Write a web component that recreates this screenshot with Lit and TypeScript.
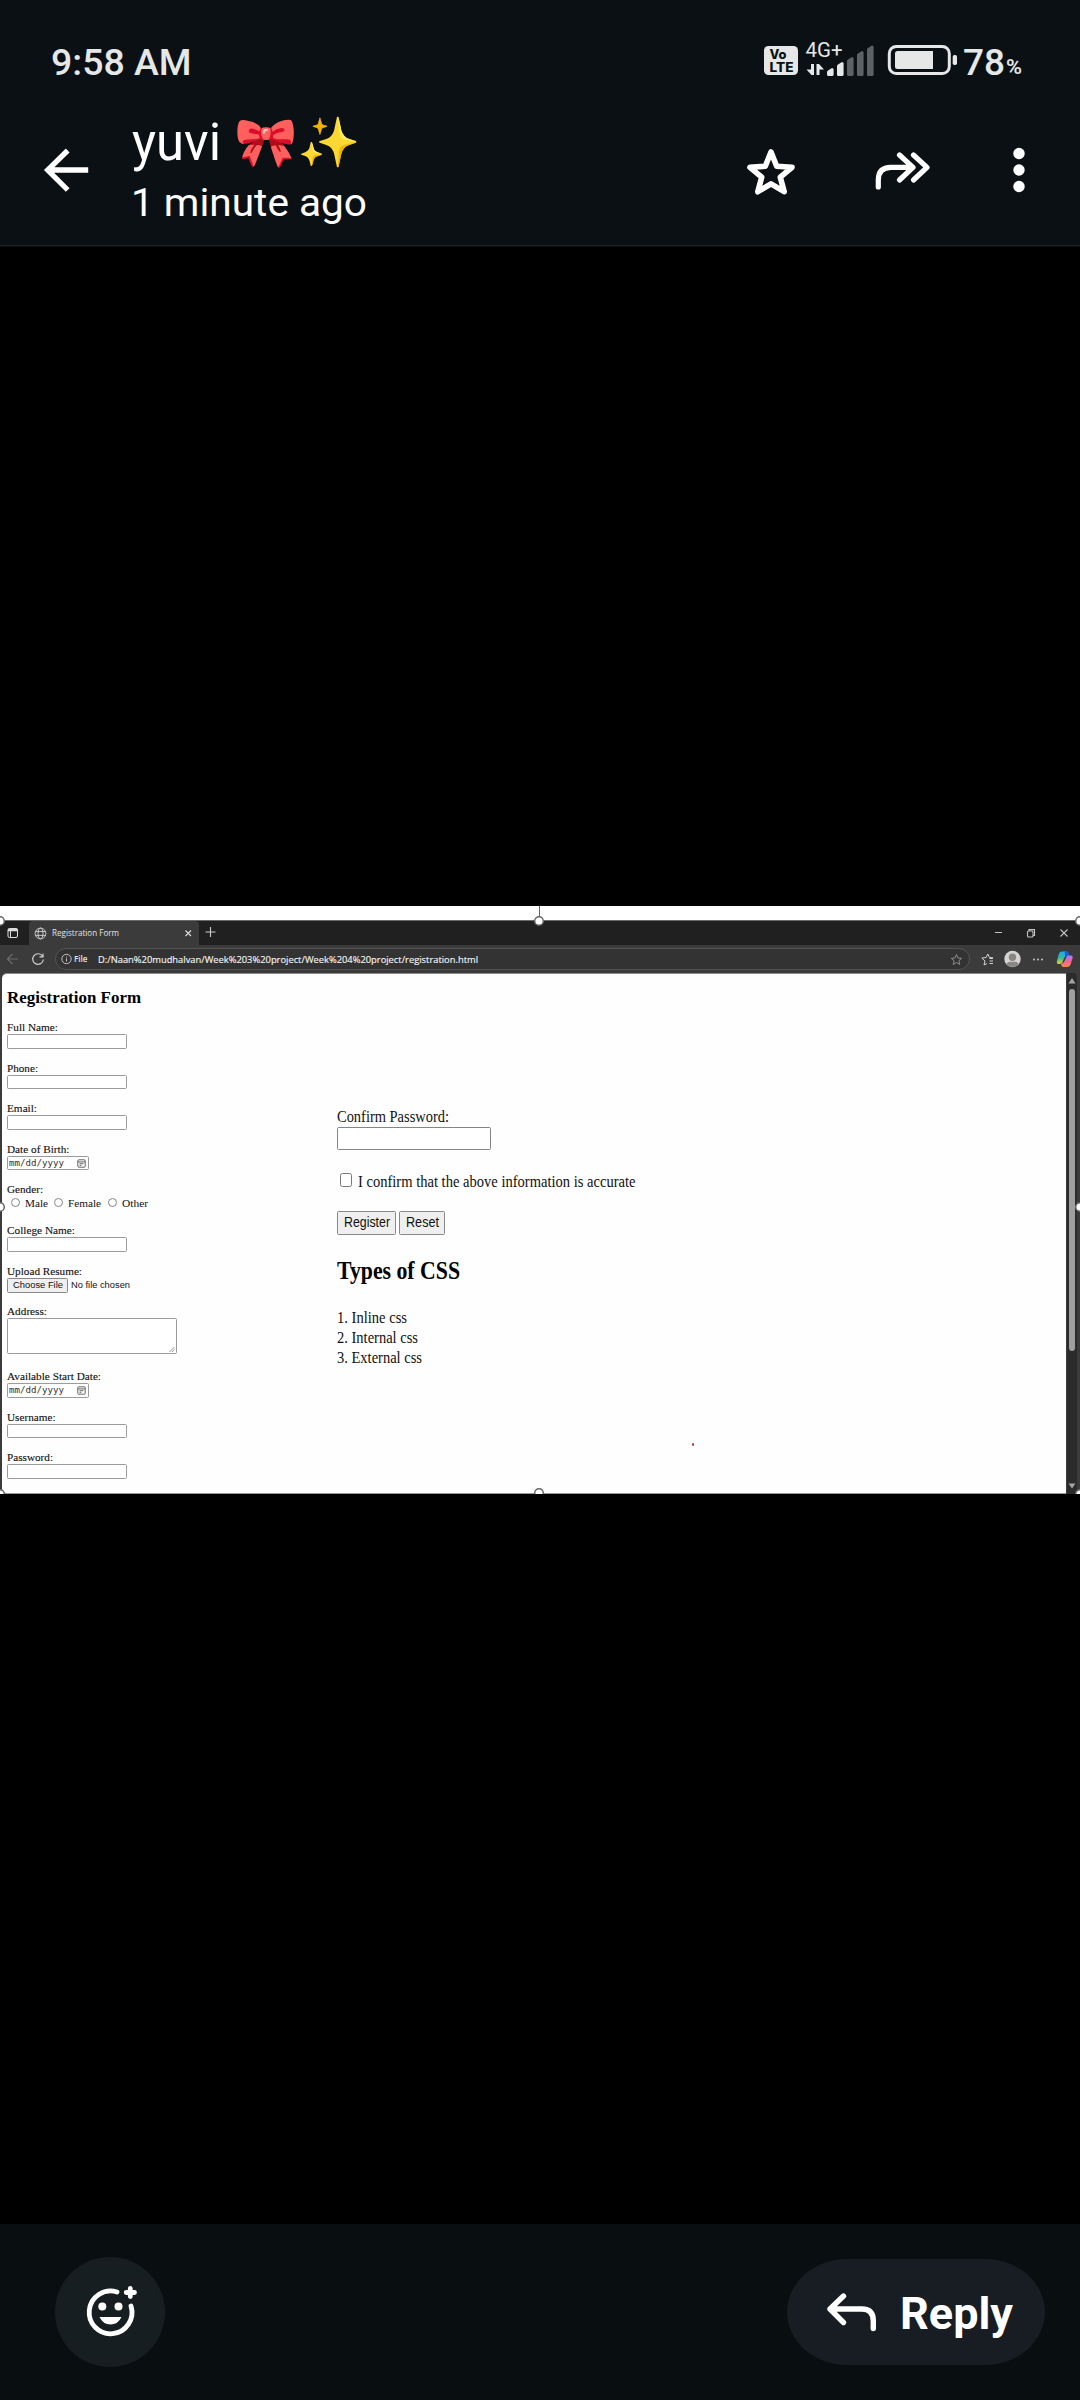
import { LitElement, html, css, svg } from "lit";
import { customElement, property } from "lit/decorators.js";

/** A single line of text stretched or squeezed to an exact width. */
@customElement("fit-text")
class FitText extends LitElement {
  @property() text = "";
  @property({ type: Number }) w = 0;

  static styles = css`
    :host { display: block; flex: none; white-space: pre; }
    .t { display: inline-block; transform-origin: 0 0; white-space: pre; }
  `;

  render() {
    return html`<span class="t">${this.text}</span>`;
  }

  updated() {
    const t = this.renderRoot.querySelector(".t") as HTMLElement;
    t.style.transform = "none";
    const natural = t.getBoundingClientRect().width;
    this.style.width = `${this.w}px`;
    if (natural > 0) t.style.transform = `scaleX(${this.w / natural})`;
  }
}

@customElement("status-bar")
class StatusBar extends LitElement {
  static styles = css`
    :host {
      display: flex; height: 82px; padding: 41px 58px 0 51px; box-sizing: border-box;
      font-family: Roboto, sans-serif; color: #e6e8e8; justify-content: space-between;
    }
    .time { font-size: 37px; font-weight: 500; line-height: 44px; }
    .right { display: flex; align-items: flex-start; }
    .icons { display: block; margin: -1px 4px 0 0; }
    .num { font-size: 37px; font-weight: 500; line-height: 44px; }
    .pct { font-size: 21px; font-weight: 600; line-height: 24px; margin: 14px 0 0 1px; }
    .volte { font: 800 12.5px Inter, sans-serif; }
    .net { font: 400 19.5px Roboto, sans-serif; }
  `;

  render() {
    const bars = [
      [827, 68, 1], [837, 62, 1], [847, 57, 0], [857, 51, 0], [867, 45.5, 0],
    ];
    return html`
      <fit-text class="time" text="9:58 AM" .w=${140.5}></fit-text>
      <div class="right">
        <svg class="icons" width="196" height="40" viewBox="763 40 196 40">
          <rect x="764" y="46" width="34" height="29" rx="4.5" fill="#e6e8e8" />
          <text class="volte" x="769.5" y="59" fill="#0a1014" textLength="17" lengthAdjust="spacingAndGlyphs">Vo</text>
          <text class="volte" x="769.5" y="71.5" fill="#0a1014" textLength="24" lengthAdjust="spacingAndGlyphs">LTE</text>
          <text class="net" x="805.5" y="57.2" fill="#e6e8e8" textLength="37" lengthAdjust="spacingAndGlyphs">4G+</text>
          <path d="M814 64V75H811.5L806.5 69.5H811V64ZM816.5 75V64H819L824 69.5H819.5V75Z" fill="#e6e8e8" />
          ${bars.map(([x, y, on]) => svg`<path d="M${x} ${y + 4}Q${x} ${y + 3} ${x + 1} ${y + 2.4}L${x + 5} ${y}Q${x + 6.6} ${y} ${x + 6.6} ${y + 1.5}V74.5Q${x + 6.6} 76 ${x + 5} 76H${x + 1.5}Q${x} 76 ${x} 74.5Z" fill=${on ? "#e6e8e8" : "#5e6265"} />`)}
          <rect x="889.3" y="46.5" width="60" height="27" rx="7" fill="none" stroke="#e6e8e8" stroke-width="3" />
          <path d="M897.5 51H933V69H897.5Q895 69 895 66.500V53.500Q895 51 897.500 51Z" fill="#e6e8e8" />
          <rect x="952.7" y="55" width="4.300" height="10" rx="1.800" fill="#e6e8e8" />
        </svg>
        <fit-text class="num" text="78" .w=${42}></fit-text>
        <fit-text class="pct" text="%" .w=${16}></fit-text>
      </div>
    `;
  }
}

@customElement("viewer-header")
class ViewerHeader extends LitElement {
  static styles = css`
    :host {
      display: flex; height: 164px; padding: 0 54px 0 40px; box-sizing: border-box;
      font-family: Roboto, "Noto Color Emoji", sans-serif; color: #fff;
      border-bottom: 1px solid #1d2225;
    }
    .back { margin: 63px 40px 0 0; flex: none; }
    .who { flex: 1; }
    .name { display: flex; height: 62px; margin-top: 30px; font-size: 51px; line-height: 62px; }
    .emoji { margin-left: 13px; font: 48.5px/62px "Noto Color Emoji", sans-serif; }
    .ago { font-size: 38.5px; line-height: 46px; margin: 6px 0 0 -1px; }
    .actions { display: block; flex: none; margin-top: 58px; }
  `;

  render() {
    return html`
      <svg class="back" width="52" height="52" viewBox="40 145 52 52" fill="none" stroke="#fff" stroke-width="5.300">
        <path d="M88.200 170H48M67.700 150.500L47.700 170L67.700 190" />
      </svg>
      <div class="who">
        <div class="name">
          <fit-text text="yuvi" .w=${89}></fit-text>
          <fit-text class="emoji" text="🎀✨" .w=${127}></fit-text>
        </div>
        <fit-text class="ago" text="1 minute ago" .w=${236}></fit-text>
      </div>
      <svg class="actions" width="286" height="60" viewBox="740 140 286 60" fill="none" stroke="#fff" stroke-width="5.600" stroke-linecap="round" stroke-linejoin="round">
        <path d="M771 152L776.700 166.300L792 167.300L780.300 177.200L784.200 191.700L771 183.800L757.800 191.700L761.700 177.200L750 167.300L765.300 166.300Z" />
        <path d="M878.300 187V180Q878.300 167.300 891 167.300H913M899.500 155L913 167.300L899.500 180M913.500 155L927 167.300L913.500 180" stroke-width="5.200" />
        <g fill="#fff" stroke="none"><circle cx="1019" cy="153.500" r="5.700" /><circle cx="1019" cy="170" r="5.700" /><circle cx="1019" cy="186.500" r="5.700" /></g>
      </svg>
    `;
  }
}

@customElement("browser-chrome")
class BrowserChrome extends LitElement {
  static styles = css`
    :host { display: block; font-family: "Open Sans", "Noto Sans", sans-serif; color: #e4e4e4; }
    .tabs { display: flex; align-items: center; height: 24px; background: #202020; border-top: 1px solid #6a6a6a; box-sizing: content-box; }
    .win { margin: 0 10px 0 7px; }
    .tab { display: flex; align-items: center; width: 170px; height: 24px; background: #3b3b3b; border-radius: 4px 4px 0 0; }
    .globe { margin: 0 5px 0 5px; }
    .title { font-size: 9px; line-height: 12px; margin-top: -1px; }
    .x { margin-left: 65px; }
    .plus { margin-left: 5px; }
    .ctl { margin-left: auto; margin-right: 11px; }
    .bar { display: flex; align-items: center; height: 28px; background: #3b3b3b; }
    .nav { flex: none; }
    .pill { display: flex; align-items: center; width: 915px; height: 22px; border: 1px solid #535353; border-radius: 11px; background: #333; box-sizing: border-box; }
    .info { margin: 0 2px 0 5px; }
    .file { font-size: 9px; line-height: 12px; font-weight: 600; }
    .url { font-size: 9.800px; line-height: 13px; margin-left: 10px; color: #f4f4f4; -webkit-text-stroke: .15px #f4f4f4; }
    .fav { margin-left: auto; margin-right: 6px; }
    .tools { flex: none; margin-left: 8px; }
  `;

  render() {
    return html`
      <div class="tabs">
        <svg class="win" width="12" height="12" fill="none" stroke="#ddd"><rect x="1" y="1.500" width="9.500" height="9" rx="1.500" /><path d="M1 3H10.500" stroke-width="2.500" /><path d="M3.500 3V10" /></svg>
        <div class="tab">
          <svg class="globe" width="13" height="13" fill="none" stroke="#d5d5d5" stroke-width=".9"><circle cx="6.500" cy="6.500" r="5.400" /><ellipse cx="6.500" cy="6.500" rx="2.500" ry="5.400" /><path d="M1.500 4.600H11.500M1.500 8.400H11.500" /></svg>
          <fit-text class="title" text="Registration Form" .w=${67}></fit-text>
          <svg class="x" width="9" height="9" stroke="#ddd" stroke-width="1.100"><path d="M1.500 1.500L7 7M7 1.500L1.500 7" /></svg>
        </div>
        <svg class="plus" width="12" height="12" stroke="#ccc" stroke-width="1.100"><path d="M6.500 0V10M1.500 5H11.500" /></svg>
        <svg class="ctl" width="76" height="12" fill="none" stroke="#c4c4c4" stroke-width="1.100">
          <path d="M2 5.500H9M67.500 2.500L74.500 9.500M74.500 2.500L67.500 9.500" /><rect x="34.500" y="4" width="5.500" height="6" rx="1" /><path d="M36 4V2.600H41.500V8.500H40" />
        </svg>
      </div>
      <div class="bar">
        <svg class="nav" width="55" height="16" fill="none" stroke-width="1.200">
          <path d="M18 8H7.500M12.500 3L7.500 8L12.500 13" stroke="#6c6c6c" />
          <path d="M42.500 5.200A5.300 5.300 0 1 0 43.300 8.500M43 2.500V5.800H39.500" stroke="#cfcfcf" />
        </svg>
        <div class="pill">
          <svg class="info" width="11" height="12" fill="none" stroke="#cfcfcf" stroke-width=".9"><circle cx="5.500" cy="6" r="4.700" /><path d="M5.500 5.300V8.600M5.500 3.400V4.400" /></svg>
          <fit-text class="file" text="File" .w=${13.5}></fit-text>
          <fit-text class="url" text="D:/Naan%20mudhalvan/Week%203%20project/Week%204%20project/registration.html" .w=${380}></fit-text>
          <svg class="fav" width="13" height="13" fill="none" stroke="#8c8c8c" stroke-linejoin="round"><path d="M6.500 1.500L8 5L11.700 5.300L8.900 7.700L9.800 11.500L6.500 9.500L3.200 11.500L4.100 7.700L1.300 5.300L5 5Z" /></svg>
        </div>
        <svg class="tools" width="98" height="20" viewBox="978 949 98 20" fill="none">
          <path d="M993 957.800L989.500 957.500L987.800 954L986.200 957.500L981.800 958L985 961L984 965L987 963.500M989.500 958.500H993M989.500 961H993M989.500 963.500H993" stroke="#d2d2d2" stroke-linejoin="round" />
          <circle cx="1012.500" cy="959" r="8.200" fill="#d6d4d2" />
          <circle cx="1012.500" cy="957.300" r="3.700" fill="#8a8683" />
          <path d="M1006.500 964.500Q1007 961.700 1010 961.700H1015Q1018 961.700 1018.500 964.500Q1012.500 969.500 1006.500 964.500Z" fill="#8a8683" />
          <g fill="#d2d2d2"><circle cx="1034" cy="959.500" r=".9" /><circle cx="1038" cy="959.500" r=".9" /><circle cx="1042" cy="959.500" r=".9" /></g>
          <defs>
            <linearGradient id="a" x1="0" y1="0" x2="0" y2="1"><stop offset="0" stop-color="#1faef0" /><stop offset=".5" stop-color="#35b7a0" /><stop offset="1" stop-color="#e7d02c" /></linearGradient>
            <linearGradient id="b" x1="0" y1="0" x2="0" y2="1"><stop offset="0" stop-color="#b07cf0" /><stop offset=".5" stop-color="#f0619c" /><stop offset="1" stop-color="#ff8a4a" /></linearGradient>
          </defs>
          <path d="M1061.500 951.500H1066Q1068 951.500 1069 955L1066.500 955.500Q1064.500 956 1063.700 959L1062.500 962Q1061.800 964 1060 964H1058.500Q1056.300 964 1057 961L1058.700 954.500Q1059.600 951.500 1061.500 951.500Z" fill="url(#a)" />
          <path d="M1064.500 951.500H1067Q1068.500 951.500 1069 954L1069.700 956L1064.800 957.500Q1065.500 954 1064.500 951.500Z" fill="#1e5fd8" />
          <path d="M1067.500 967H1063.500Q1061.500 967 1061 963.800L1062.800 963.200Q1064.500 962 1066 958Q1066.800 955.500 1069 955.500H1071Q1073.200 955.500 1072.600 958L1070.800 964Q1069.800 967 1067.500 967Z" fill="url(#b)" />
        </svg>
      </div>
    `;
  }
}

@customElement("registration-page")
class RegistrationPage extends LitElement {
  static styles = css`
    :host { display: flex; height: 521px; background: #3b3b3b; padding-left: 2px; box-sizing: border-box; font-family: "Liberation Serif", serif; color: #111; }
    .page { display: flex; width: 1064px; flex: none; background: #fefefe; border-radius: 5px 0 0 5px; border-top: 1px solid #8a8a8a; border-bottom: 1px solid #9a9a9a; box-sizing: border-box; padding-left: 5px; position: relative; }
    .left { width: 330px; padding-top: 14px; flex: none; }
    h2 { margin: 0; font-size: 16.5px; line-height: 20px; color: #000; }
    .left h2 { margin-bottom: 13.3px; }
    .group { height: 40.55px; }
    .group.tall { height: 64.9px; }
    .label { font-size: 11px; line-height: 13px; -webkit-text-stroke: .12px #111; }
    .box { box-sizing: border-box; border: 1px solid #9b9b9b; border-radius: 1.5px; background: #fff; width: 119.5px; height: 14.5px; }
    .area { width: 170px; height: 36px; display: flex; justify-content: flex-end; align-items: flex-end; }
    .date { width: 82px; display: flex; align-items: center; justify-content: space-between; padding: 0 2px 0 1px; font: 9.5px/12px "DejaVu Sans Mono", monospace; color: #333; }
    .row { display: flex; align-items: center; height: 15px; font-size: 11px; line-height: 13px; }
    .radio { box-sizing: border-box; width: 9px; height: 9px; border: 1px solid #858585; border-radius: 50%; margin: 0 5px 2px 3.5px; background: #fff; }
    .radio.next { margin-left: 6.500px; }
    .btn { box-sizing: border-box; border: 1px solid #888; border-radius: 1.5px; background: #efefef; display: flex; align-items: center; justify-content: center; font-family: "Liberation Sans", sans-serif; }
    .choose { width: 61px; height: 15px; font-size: 9.2px; line-height: 12px; }
    .none { font: 9.2px/12px "Liberation Sans", sans-serif; margin-left: 3px; }
    .right { flex: 1; padding-top: 133.3px; }
    .big { font-size: 17px; line-height: 20px; }
    .confirm { width: 154px; height: 23px; border-color: #858585; }
    .check { display: flex; align-items: center; margin-top: 21.5px; height: 20px; }
    .tick { box-sizing: border-box; width: 11.5px; height: 13.5px; border: 1.5px solid #777; border-radius: 2.500px; margin: 0 6.500px 4px 3px; }
    .btns { display: flex; gap: 3px; margin-top: 19px; height: 24px; font-size: 15px; line-height: 18px; }
    .b1 { width: 59px; } .b2 { width: 46px; }
    .btns .btn { padding-bottom: 2px; }
    .right h2 { font-size: 26px; line-height: 30px; margin: 21px 0 22px; }
    .scroll { display: flex; flex-direction: column; align-items: center; width: 10px; background: #2b2b2b; margin-left: 1px; border-radius: 0 4px 0 0; }
    .thumb { width: 6px; height: 362px; border-radius: 3px; background: #9f9f9f; margin: 5px 0 auto; }
    .up { margin-top: 5px; } .down { margin-bottom: 5px; }
    .speck { position: absolute; left: 689.5px; top: 469px; width: 2.500px; height: 2.500px; border-radius: 50%; background: #b94040; }
  `;

  private field(label: string, w: number, body: unknown = html`<div class="box"></div>`, tall = false) {
    return html`<div class="group ${tall ? "tall" : ""}"><fit-text class="label" text=${label} .w=${w}></fit-text>${body}</div>`;
  }

  private date() {
    return html`<div class="box date"><fit-text text="mm/dd/yyyy" .w=${55}></fit-text>
      <svg width="9" height="9" fill="none" stroke="#555" stroke-width=".9"><rect x=".8" y=".8" width="7.400" height="7.400" rx="1" /><path d="M.8 2.900H8.200M2.500 4.700H6.500M2.500 6.300H4.500" /></svg></div>`;
  }

  render() {
    return html`
      <div class="page">
        <div class="left">
          <h2><fit-text text="Registration Form" .w=${134}></fit-text></h2>
          ${this.field("Full Name:", 51)}
          ${this.field("Phone:", 31)}
          ${this.field("Email:", 30)}
          ${this.field("Date of Birth:", 62.5, this.date())}
          ${this.field("Gender:", 36, html`<div class="row">
            <span class="radio"></span><fit-text text="Male" .w=${23}></fit-text>
            <span class="radio next"></span><fit-text text="Female" .w=${33}></fit-text>
            <span class="radio next"></span><fit-text text="Other" .w=${26}></fit-text></div>`)}
          ${this.field("College Name:", 68)}
          ${this.field("Upload Resume:", 75, html`<div class="row"><div class="btn choose"><fit-text text="Choose File" .w=${50}></fit-text></div><fit-text class="none" text="No file chosen" .w=${59}></fit-text></div>`)}
          ${this.field("Address:", 40, html`<div class="box area"><svg width="7" height="7" stroke="#777" stroke-width=".8"><path d="M.5 6L5.500 1M3 6L5.500 3.500" /></svg></div>`, true)}
          ${this.field("Available Start Date:", 94, this.date())}
          ${this.field("Username:", 48.5)}
          ${this.field("Password:", 46)}
        </div>
        <div class="right">
          <fit-text class="big" text="Confirm Password:" .w=${112}></fit-text>
          <div class="box confirm"></div>
          <div class="check"><span class="tick"></span><fit-text class="big" text="I confirm that the above information is accurate" .w=${277.5}></fit-text></div>
          <div class="btns">
            <div class="btn b1"><fit-text text="Register" .w=${46}></fit-text></div>
            <div class="btn b2"><fit-text text="Reset" .w=${33}></fit-text></div>
          </div>
          <h2><fit-text text="Types of CSS" .w=${123}></fit-text></h2>
          <fit-text class="big" text="1. Inline css" .w=${70}></fit-text>
          <fit-text class="big" text="2. Internal css" .w=${81}></fit-text>
          <fit-text class="big" text="3. External css" .w=${85}></fit-text>
        </div>
        <span class="speck"></span>
      </div>
      <div class="scroll">
        <svg class="up" width="8" height="6"><path d="M4 0L7.500 5.500H.5Z" fill="#a5a5a5" /></svg>
        <div class="thumb"></div>
        <svg class="down" width="8" height="6"><path d="M4 5.500L7.500 .5H.5Z" fill="#a5a5a5" /></svg>
      </div>
    `;
  }
}

@customElement("app-root")
class AppRoot extends LitElement {
  static styles = css`
    :host { display: flex; flex-direction: column; width: 1080px; height: 2400px; background: #000; overflow: hidden; }
    .top { background: #0a1014; flex: none; height: 247px; }
    .photo { position: relative; margin-top: 659px; height: 588px; background: #fff; overflow: hidden; flex: none; }
    .frame { padding-top: 14px; }
    .handles { position: absolute; left: 0; top: 0; }
    .footer { margin-top: auto; height: 176px; flex: none; background: #090e11; display: flex; align-items: center; justify-content: space-between; padding: 0 35px 0 55px; box-sizing: border-box; }
    .react { width: 110px; height: 110px; border-radius: 50%; background: #171e21; display: flex; }
    .reply { width: 258px; height: 106px; border-radius: 60px / 53px; background: #171d22; display: flex; align-items: center; box-sizing: border-box; padding-left: 37px; color: #fff; font: 700 44.5px/54px Roboto, sans-serif; }
    .reply fit-text { margin-top: 3px; }
    .arrow { margin-right: 20px; flex: none; }
  `;

  render() {
    const handles = [[0, 15], [539, 15], [1080, 15], [0, 301], [1080, 301], [0, 588], [539, 587], [1080, 588]];
    return html`
      <div class="top"><status-bar></status-bar><viewer-header></viewer-header></div>
      <div class="photo">
        <div class="frame"><browser-chrome></browser-chrome><registration-page></registration-page></div>
        <svg class="handles" width="1080" height="588" fill="#fff" stroke="#666" stroke-width="1.500">
          <path d="M539.500 0V12" stroke-width="1" />
          ${handles.map(([x, y]) => svg`<circle cx=${x} cy=${y} r="4.300" />`)}
        </svg>
      </div>
      <div class="footer">
        <div class="react">
          <svg width="110" height="110" viewBox="55 2257 110 110" fill="none" stroke="#fff" stroke-width="4.800" stroke-linecap="round">
            <path d="M117 2292A21.400 21.400 0 1 0 131 2306M130.300 2288.500V2296.500M126.200 2292.500H134.500" />
            <g fill="#fff" stroke="none"><circle cx="102.300" cy="2306.500" r="4" /><circle cx="118.500" cy="2306.500" r="4" /><path d="M99.500 2317H121.500Q118 2324.500 110.500 2324.500Q103 2324.500 99.500 2317Z" /></g>
          </svg>
        </div>
        <div class="reply">
          <svg class="arrow" width="56" height="50" viewBox="824 2287 56 50" fill="none" stroke="#fff" stroke-width="5.400" stroke-linecap="round" stroke-linejoin="round"><path d="M873.300 2328.500V2321Q873.300 2309 862 2309H830M843.500 2296L830 2309L843.500 2322.500" /></svg>
          <fit-text text="Reply" .w=${113}></fit-text>
        </div>
      </div>
    `;
  }
}
